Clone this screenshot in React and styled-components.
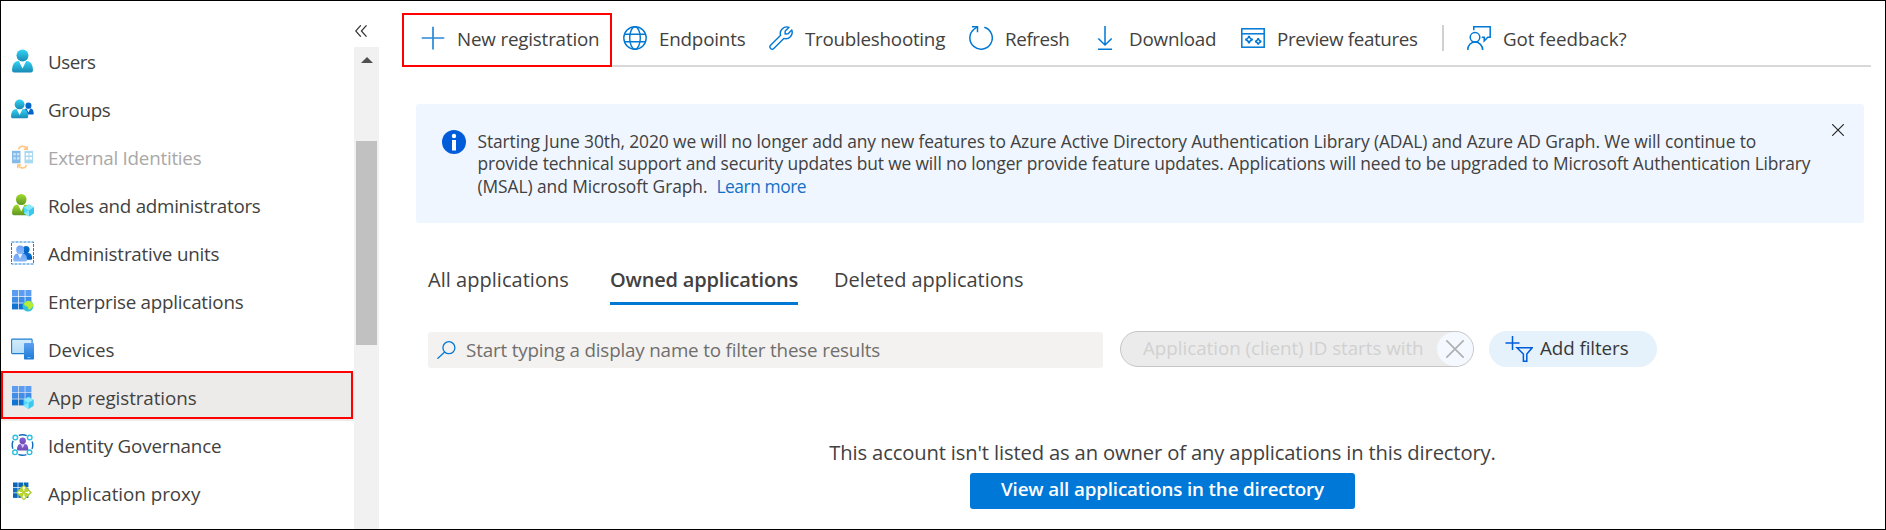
import React from "react";
import styled, { createGlobalStyle } from "styled-components";

const GlobalStyle = createGlobalStyle`
  * { box-sizing: border-box; }
  body {
    margin: 0;
    background: #fff;
    color: #424140;
    font-family: "Open Sans", "Noto Sans", sans-serif;
  }
  svg { display: block; flex: none; }
`;

const Frame = styled.div`
  width: 1886px;
  height: 530px;
  border: 1px solid #000;
  display: flex;
  overflow: hidden;
`;

/* ---------- side navigation ---------- */

const Sidebar = styled.aside`
  width: 378px;
  flex: none;
  display: flex;
`;

const Menu = styled.nav`
  width: 353px;
  padding-top: 36px;
`;

const MenuItem = styled.div`
  position: relative;
  height: 48px;
  padding-left: 9px;
  display: flex;
  align-items: center;
  gap: 14px;
  font-size: 18.8px;
  line-height: 26px;
  letter-spacing: ${(p) => p.$tracking}px;
  color: ${(p) => (p.$disabled ? "#a9a8a7" : "inherit")};
  background: ${(p) => (p.$active ? "#edebe9" : "transparent")};
  white-space: nowrap;

  svg { opacity: ${(p) => (p.$disabled ? 0.5 : 1)}; }
`;

const RowHighlight = styled.span`
  position: absolute;
  inset: -2px 1px 2px 0;
  border: 2px solid #f00;
`;

const MenuText = styled.span`
  padding-top: 1px;
`;

const Rail = styled.div`
  width: 25px;
  display: flex;
  flex-direction: column;
`;

const CollapseButton = styled.div`
  height: 46px;
  padding: 24px 0 0 1px;
`;

const ScrollTrack = styled.div`
  flex: 1;
  background: #f1f1f1;
  display: flex;
  flex-direction: column;
  align-items: center;
  padding-top: 10px;
`;

const ScrollThumb = styled.div`
  width: 21px;
  height: 204px;
  margin-top: 78px;
  background: #c1c1c1;
`;

/* ---------- command bar ---------- */

const Main = styled.main`
  flex: 1;
  min-width: 0;
  display: flex;
  flex-direction: column;
`;

const Toolbar = styled.div`
  position: relative;
  height: 66px;
  margin: 0 14px 0 37px;
  padding: 24px 0 0 5px;
  display: flex;
  align-items: flex-start;
  border-bottom: 2px solid #d8d8d8;
`;

const Command = styled.div`
  width: ${(p) => p.$width}px;
  flex: none;
  display: flex;
  align-items: center;
  gap: 12px;
  height: 26px;
  font-size: 18.8px;
  line-height: 26px;
  letter-spacing: ${(p) => p.$tracking}px;
  white-space: nowrap;
`;

const CommandText = styled.span`
  padding-top: 2px;
`;

const CommandDivider = styled.div`
  width: 2px;
  height: 26px;
  margin-right: 23px;
  background: #d2d0ce;
`;

const CommandHighlight = styled.span`
  position: absolute;
  left: -14px;
  top: 12px;
  width: 210px;
  height: 54px;
  border: 2px solid #f00;
`;

/* ---------- notice ---------- */

const Notice = styled.section`
  width: 1448px;
  height: 119px;
  margin: 37px 0 0 37px;
  padding: 26px 20px 0 26px;
  display: flex;
  align-items: flex-start;
  background: #eff6ff;
  border-radius: 3px;
`;

const NoticeBody = styled.div`
  flex: 1;
  margin-left: 11.5px;
  font-size: 17.4px;
  line-height: 22.4px;
  white-space: nowrap;
`;

const NoticeLine = styled.div`
  letter-spacing: ${(p) => p.$tracking}px;
`;

const NoticeLink = styled.a`
  margin-left: 9px;
  color: #1570c4;
  letter-spacing: -0.45px;
`;

const Dismiss = styled.div`
  margin-top: -6px;
`;

/* ---------- tabs and filters ---------- */

const Tabs = styled.div`
  display: flex;
  margin: 41px 0 0 49px;
  height: 41px;
`;

const Tab = styled.div`
  height: 41px;
  width: ${(p) => p.$width}px;
  margin-right: ${(p) => p.$after}px;
  font-size: 20px;
  font-weight: ${(p) => (p.$active ? 600 : 400)};
  line-height: 32px;
  letter-spacing: ${(p) => p.$tracking}px;
  border-bottom: 3px solid ${(p) => (p.$active ? "#0078d4" : "transparent")};
  white-space: nowrap;
`;

const Filters = styled.div`
  display: flex;
  margin: 26px 0 0 49px;
  height: 37px;
`;

const SearchBox = styled.div`
  width: 675px;
  height: 36px;
  margin: 1px 17px 0 0;
  padding-left: 9px;
  display: flex;
  align-items: center;
  gap: 10px;
  background: #f3f2f1;
  border-radius: 3px;
  color: #706e6c;
  font-size: 18.8px;
  letter-spacing: -0.165px;
`;

const DisabledPill = styled.div`
  width: 354px;
  height: 36px;
  padding-left: 22px;
  display: flex;
  align-items: center;
  justify-content: space-between;
  border: 1px solid #c6c6c6;
  border-radius: 18px;
  background: #ebebeb;
  color: #d1d1d1;
  font-size: 18.8px;
  line-height: 32px;
  letter-spacing: -0.03px;
`;

const PillClose = styled.span`
  width: 36px;
  height: 34px;
  border-radius: 50%;
  background: #f3f9fe;
  display: flex;
  align-items: center;
  justify-content: center;
`;

const AddFilters = styled.div`
  width: 168px;
  height: 36px;
  margin-left: 15px;
  padding-left: 16px;
  display: flex;
  align-items: center;
  gap: 7px;
  border-radius: 18px;
  background: #e5f1fb;
  color: #383736;
  font-size: 18.8px;
  line-height: 32px;
  letter-spacing: -0.08px;
`;

const PillText = styled.span`
  height: 34px;
`;

/* ---------- empty state ---------- */

const EmptyState = styled.div`
  width: 1567px;
  margin-top: 68px;
  display: flex;
  flex-direction: column;
  align-items: center;
`;

const EmptyText = styled.p`
  margin: 0;
  font-size: 20.2px;
  line-height: 32px;
  letter-spacing: -0.14px;
  white-space: nowrap;
`;

const PrimaryButton = styled.button`
  width: 385px;
  height: 36px;
  margin-top: 5px;
  padding: 0 0 3px;
  border: 0;
  border-radius: 3px;
  background: #0078d7;
  color: #fff;
  font: 600 18.8px/33px "Open Sans", "Noto Sans", sans-serif;
  letter-spacing: -0.15px;
  white-space: nowrap;
`;

/* ---------- icons ---------- */

const Icon = ({ children, ...rest }) => (
  <svg width="24" height="24" viewBox="0 0 24 24" fill="none" {...rest}>
    {children}
  </svg>
);

const Gradients = () => (
  <svg width="0" height="0">
    <defs>
      {[
        ["cyan", "#32d4f5", "#198ab3"],
        ["blue", "#0a6fd0", "#0060c0"],
        ["green", "#a2dc2a", "#5e9624"],
        ["sky", "#5ea0ef", "#1a7bd8"],
        ["purple", "#8661d6", "#6f4bb2"],
        ["soft", "#6fa3f7", "#86b8fb"],
        ["screen", "#d4ecfb", "#b4dcf8"],
      ].map(([id, a, b]) => (
        <linearGradient key={id} id={id} x1="0" y1="0" x2="0" y2="1">
          <stop offset="0" stopColor={a} />
          <stop offset="1" stopColor={b} />
        </linearGradient>
      ))}
    </defs>
  </svg>
);

/* Head-and-shoulders figure drawn in a 21 x 23 box. */
const Person = ({ fill, tie = "#fff", ...rest }) => (
  <g {...rest}>
    <path
      d="M0 20.5C.4 15 2.300 11.500 6.500 11.500h8c4.200 0 6.100 3.500 6.500 9 0 1.500-.8 2.500-2.200 2.500H2.200C.8 23 0 22 0 20.500Z"
      fill={`url(#${fill})`}
    />
    <path d="M6.800 11.500 10.500 19l3.700-7.500Z" fill={tie} />
    <circle cx="10.500" cy="6" r="6" fill={`url(#${fill})`} />
  </g>
);

const Cube = ({ x, y }) => (
  <g transform={`translate(${x} ${y})`}>
    <path d="M5 0 10 2.800v6L5 12 0 8.800v-6Z" fill="#50d8f8" />
    <path d="M5 0 10 2.800 5 6 0 2.800Z" fill="#8aeafd" />
    <path d="M5 6 10 2.800v6L5 12Z" fill="#3cc8ee" />
    <path d="M5 6 0 8.800 5 12Z" fill="#8beaff" />
  </g>
);

const Tiles = ({ size = 20, colors = ["#5b9df0", "#3f8de6", "#1173d2"] }) => {
  const t = (size - 2) / 3;
  return colors.flatMap((c, r) =>
    [0, 1, 2].map((k) => (
      <rect key={`${r}${k}`} x={k * (t + 0.7)} y={r * (t + 0.7)} width={t} height={t} fill={c} />
    ))
  );
};

const UsersIcon = () => (
  <Icon><Person fill="cyan" transform="translate(2 .5)" /></Icon>
);

const GroupsIcon = () => (
  <Icon>
    <Person fill="blue" transform="translate(13.200 5.400) scale(.5 .53)" />
    <Person fill="cyan" transform="translate(1 2.500) scale(.82 .82)" />
  </Icon>
);

const ExternalIcon = () => (
  <Icon>
    <rect x="2" y="5.800" width="8.500" height="12.500" fill="#0f78cf" />
    <rect x="14.500" y="5.800" width="8.500" height="12.500" fill="#54b4e4" />
    <g fill="#8ec8f0">
      <rect x="3.300" y="8" width="2.500" height="2.500" /><rect x="6.900" y="8" width="2.500" height="2.500" />
      <rect x="3.300" y="12.100" width="2.500" height="2.500" /><rect x="6.900" y="12.100" width="2.500" height="2.500" />
    </g>
    <g fill="#fff">
      <rect x="16" y="8" width="2.500" height="2.500" /><rect x="19.500" y="8" width="2.500" height="2.500" />
      <rect x="16" y="12.100" width="2.500" height="2.500" /><rect x="19.500" y="12.100" width="2.500" height="2.500" />
    </g>
    <g stroke="#ff8c00" strokeWidth="1.400">
      <path d="M8.500 4.300c.6-2 2-3 4-3s3.500 1 4.200 3" /><path d="M13.800 4.200h3.500V1" />
      <path d="M16.500 20c-.6 2-2 3-4 3s-3.500-1-4.200-3" /><path d="M11.200 20h-3.500v3.200" />
    </g>
  </Icon>
);

const RolesIcon = () => (
  <Icon>
    <Person fill="green" transform="translate(2 1) scale(.88 .92)" />
    <Cube x="14" y="11.500" />
  </Icon>
);

const AdminUnitsIcon = () => (
  <Icon>
    <rect x="1.500" y="1" width="22" height="22" stroke="#1b80d6" strokeDasharray="3 1" />
    <Person fill="blue" tie="#0a6fd0" transform="translate(10 5) scale(.58 .6)" />
    <Person fill="soft" tie="#e8f2ff" transform="translate(3.200 4.500) scale(.66 .7)" />
  </Icon>
);

const EnterpriseIcon = () => (
  <Icon>
    <g transform="translate(2 1)"><Tiles /></g>
    <circle cx="18" cy="17" r="5.500" fill="#35c1de" />
    <path d="M14 14.500c1.500-2.500 4-3 6.500-2.200 1.800 1.200 2.800 3 2.700 5-1 1.500-2.500 1.800-3.200 3.500-1.500.3-1.800-1.300-2-2.600-.6-1-2.500-1-3.600-2Z" fill="#b4ec36" />
  </Icon>
);

const DevicesIcon = () => (
  <Icon>
    <rect x="1.600" y="2.100" width="20.500" height="14.500" rx=".8" fill="url(#screen)" stroke="#1f7fd0" strokeWidth="1.100" />
    <rect x="14" y="6" width="10" height="16.500" rx=".8" fill="url(#sky)" />
    <path d="M17.500 20.600h3" stroke="#a5d0f7" strokeWidth=".8" />
  </Icon>
);

const AppRegIcon = () => (
  <Icon>
    <g transform="translate(2 1)"><Tiles /></g>
    <Cube x="13.500" y="12" />
  </Icon>
);

const GovernanceIcon = () => (
  <Icon>
    <circle cx="12.500" cy="12" r="10.300" stroke="#0f6cbd" strokeWidth="1.400" strokeDasharray="8.180 8" strokeDashoffset="4.090" />
    <g stroke="#2bc0e4" strokeWidth="1.400" fill="#fff">
      <circle cx="5.300" cy="4.500" r="2.300" /><circle cx="19.700" cy="4.500" r="2.300" />
      <circle cx="5" cy="19.300" r="2.300" /><circle cx="19.500" cy="19.300" r="2.300" />
    </g>
    <Person fill="purple" tie="#d9c8f8" transform="translate(7 4.500) scale(.54 .56)" />
  </Icon>
);

const ProxyIcon = () => (
  <Icon>
    <g transform="translate(3 1.500)"><Tiles size={16} colors={["#0a66b8", "#0f72c8", "#0a66b8"]} /></g>
    <path d="m13.800 4 7.700 7.500-7.700 7.500-7.500-7.500Z" fill="#b8d432" stroke="#a5c52a" strokeWidth=".8" strokeLinejoin="round" />
    <path d="M13.800 6.300v3.400M13.800 13.300v3.400M8.700 11.500h3.400M15.500 11.500h3.400M12.600 7.300l1.200-1.200 1.200 1.200M12.600 15.700l1.200 1.200 1.200-1.200M9.700 10.300l-1.200 1.200 1.200 1.200M17.900 10.300l1.200 1.200-1.200 1.200" stroke="#fff" strokeWidth="1.100" />
  </Icon>
);

const PlusIcon = () => (
  <Icon stroke="#2b88d8" strokeWidth="1.700"><path d="M12 .8v22.700M.7 12h22.600" /></Icon>
);

const GlobeIcon = () => (
  <Icon stroke="#0078d4" strokeWidth="1.400">
    <circle cx="12" cy="12" r="11.200" />
    <ellipse cx="12" cy="12" rx="5.300" ry="11.200" />
    <path d="M2 8.300h20M2 15.800h20" />
  </Icon>
);

const WrenchIcon = () => (
  <Icon stroke="#0078d4" strokeWidth="1.400" strokeLinejoin="round">
    <path d="M20 1.300A6.500 6.500 0 0 0 11.600 9.300L1.600 19.200a2.300 2.300 0 0 0 0 3.200 2.300 2.300 0 0 0 3.200 0l10-10A6.500 6.500 0 0 0 22.800 4L18.900 7.900 16.100 8 16.200 5.100Z" />
  </Icon>
);

const RefreshIcon = () => (
  <Icon stroke="#0078d4" strokeWidth="1.500">
    <path d="M15.300 1.200A11.200 11.200 0 1 1 5.300 3L8.300.8" />
    <path d="M3 .8h5.500v5.400" />
  </Icon>
);

const DownloadIcon = () => (
  <Icon stroke="#0078d4" strokeWidth="1.500"><path d="M12 0v18.800M5.300 12.500l6.700 6.500 6.700-6.500M5 23.300h14" /></Icon>
);

const PreviewIcon = () => (
  <Icon stroke="#0078d4" strokeWidth="1.500">
    <rect x=".8" y="2.800" width="22.400" height="18.400" />
    <path d="M.8 7.800h22.400" />
    <path d="M8 9.800c.5 2.400 1.300 3.200 3.700 3.800C9.300 14.200 8.500 15 8 17.400c-.5-2.400-1.300-3.200-3.700-3.800C6.700 13 7.500 12.200 8 9.800ZM17.200 12.200c.4 2.100 1 2.700 3.100 3.200-2.100.5-2.700 1.100-3.100 3.200-.4-2.100-1-2.700-3.100-3.200 2.100-.5 2.700-1.100 3.100-3.200Z" strokeWidth="1.500" />
  </Icon>
);

const FeedbackIcon = () => (
  <Icon stroke="#0078d4" strokeWidth="1.500">
    <circle cx="8" cy="11.300" r="4.800" />
    <path d="M.8 24c0-4.500 3-7.900 7.200-7.900s7.700 3.400 7.700 7.900" />
    <path d="M6.800 4.200V.8h16.400v10.500h-2.400l-3.600 3.600v-3.600h-2.400" />
  </Icon>
);

const InfoIcon = () => (
  <Icon>
    <circle cx="12" cy="12" r="12" fill="#015cda" />
    <circle cx="12" cy="6" r="2.200" fill="#fff" />
    <path d="M10 10h4v10.500h-4Z" fill="#fff" />
  </Icon>
);

const CrossIcon = ({ size, color, width }) => (
  <svg width={size} height={size} viewBox="0 0 12 12" stroke={color} strokeWidth={width}>
    <path d="m.2.2 11.600 11.600M11.800.2.2 11.800" />
  </svg>
);

const SearchIcon = () => (
  <svg width="19" height="18" viewBox="0 0 19 18" fill="none" stroke="#0078d4" strokeWidth="1.300">
    <circle cx="11.900" cy="6.700" r="6" />
    <path d="M7.700 11 .4 17.700" />
  </svg>
);

const FilterIcon = () => (
  <svg width="28" height="26" viewBox="0 0 28 26" fill="none" stroke="#015cda" strokeWidth="1.500">
    <path d="M7.500 0v14M.5 7h14" />
    <path d="M12 11.800h15.200L21.800 18v7.200h-3.400V18Z" />
  </svg>
);

const CollapseIcon = () => (
  <svg width="12" height="12" viewBox="0 0 12 12" fill="none" stroke="#333" strokeWidth="1.200">
    <path d="M5.800.3.700 6l5.100 5.700M11.500.3 6.400 6l5.100 5.700" />
  </svg>
);

const ArrowUp = () => (
  <svg width="12" height="6" viewBox="0 0 12 6"><path d="M6 0l6 6H0Z" fill="#505050" /></svg>
);

/* ---------- data ---------- */

const menu = [
  ["Users", UsersIcon, -0.45],
  ["Groups", GroupsIcon, -0.36],
  ["External Identities", ExternalIcon, -0.24, { $disabled: true }],
  ["Roles and administrators", RolesIcon, -0.27],
  ["Administrative units", AdminUnitsIcon, -0.19],
  ["Enterprise applications", EnterpriseIcon, -0.23],
  ["Devices", DevicesIcon, -0.05],
  ["App registrations", AppRegIcon, -0.08, { $active: true }],
  ["Identity Governance", GovernanceIcon, -0.18],
  ["Application proxy", ProxyIcon, -0.02],
];

const commands = [
  ["New registration", PlusIcon, 202, -0.18],
  ["Endpoints", GlobeIcon, 146, -0.19],
  ["Troubleshooting", WrenchIcon, 200, -0.25],
  ["Refresh", RefreshIcon, 124, -0.38],
  ["Download", DownloadIcon, 148, -0.2],
  ["Preview features", PreviewIcon, 201, -0.36],
];

export default function App() {
  return (
    <Frame>
      <GlobalStyle />
      <Sidebar>
        <Menu>
          {menu.map(([label, Glyph, tracking, state]) => (
            <MenuItem key={label} $tracking={tracking} {...state}>
              <Glyph />
              <MenuText>{label}</MenuText>
              {state?.$active && <RowHighlight />}
            </MenuItem>
          ))}
        </Menu>
        <Rail>
          <CollapseButton><CollapseIcon /></CollapseButton>
          <ScrollTrack>
            <ArrowUp />
            <ScrollThumb />
          </ScrollTrack>
        </Rail>
      </Sidebar>

      <Main>
        <Toolbar>
          {commands.map(([label, Glyph, width, tracking]) => (
            <Command key={label} $width={width} $tracking={tracking}>
              <Glyph />
              <CommandText>{label}</CommandText>
            </Command>
          ))}
          <CommandDivider />
          <Command $width={180} $tracking={-0.06}>
            <FeedbackIcon />
            <CommandText>Got feedback?</CommandText>
          </Command>
          <CommandHighlight />
        </Toolbar>

        <Notice>
          <InfoIcon />
          <NoticeBody>
            <NoticeLine $tracking={-0.1}>
              Starting June 30th, 2020 we will no longer add any new features to Azure Active Directory
              Authentication Library (ADAL) and Azure AD Graph. We will continue to
            </NoticeLine>
            <NoticeLine $tracking={-0.134}>
              provide technical support and security updates but we will no longer provide feature updates.
              Applications will need to be upgraded to Microsoft Authentication Library
            </NoticeLine>
            <NoticeLine $tracking={-0.08}>
              (MSAL) and Microsoft Graph.<NoticeLink>Learn more</NoticeLink>
            </NoticeLine>
          </NoticeBody>
          <Dismiss><CrossIcon size={12} color="#222" width={1.1} /></Dismiss>
        </Notice>

        <Tabs>
          <Tab $width={141} $tracking={0.03} $after={41}>All applications</Tab>
          <Tab $width={188} $tracking={-0.18} $after={36} $active>Owned applications</Tab>
          <Tab $width={190} $tracking={-0.04} $after={0}>Deleted applications</Tab>
        </Tabs>

        <Filters>
          <SearchBox>
            <SearchIcon />
            Start typing a display name to filter these results
          </SearchBox>
          <DisabledPill>
            <PillText>Application (client) ID starts with</PillText>
            <PillClose><CrossIcon size={18} color="#aeb0b2" width={1.1} /></PillClose>
          </DisabledPill>
          <AddFilters>
            <FilterIcon />
            <PillText>Add filters</PillText>
          </AddFilters>
        </Filters>

        <EmptyState>
          <EmptyText>This account isn't listed as an owner of any applications in this directory.</EmptyText>
          <PrimaryButton>View all applications in the directory</PrimaryButton>
        </EmptyState>
      </Main>
      <Gradients />
    </Frame>
  );
}
